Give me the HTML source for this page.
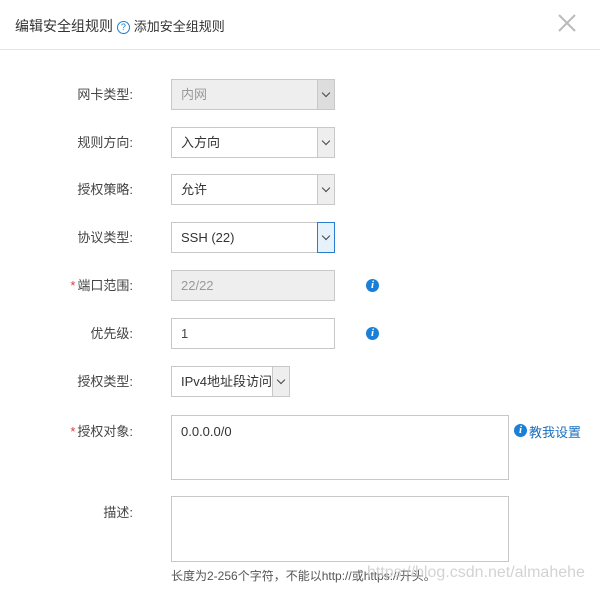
<!DOCTYPE html><html><head><meta charset="utf-8"><style>
body{margin:0;width:600px;height:596px;background:#fff;font-family:"Liberation Sans","Noto Sans CJK SC",sans-serif;font-size:13px;color:#333;position:relative;overflow:hidden}
.a{position:absolute}
.t{left:15px;top:16px;font-size:14px;color:#333}
.hr{left:0;top:49px;width:600px;height:1px;background:#e5e5e5}
.lbl{width:133px;text-align:right;left:0;line-height:31px;color:#444}
.lbl i{color:#e4393c;font-style:normal;margin-right:2px}
.box{left:171px;width:162px;height:29px;border:1px solid #c8c8c8;background:#fff;line-height:29px;box-sizing:content-box}
.box span{padding-left:9px}
.dis{background:#eee;color:#999}
.arr{position:absolute;right:0;top:0;width:16px;height:29px;border-left:1px solid #c8c8c8;background:#fff}
.arr:after{content:"";position:absolute;left:5px;top:10px;width:5px;height:5px;border-right:1px solid #444;border-bottom:1px solid #444;transform:rotate(45deg)}
.info{width:13px;height:13px;border-radius:50%;background:#1a7fd6;color:#fff;font:bold italic 11px "Liberation Serif",serif;text-align:center;line-height:13px}
</style></head><body>
<div class="a t">编辑安全组规则 <span style="display:inline-block;width:11px;height:11px;border:1px solid #1a7fd6;border-radius:50%;color:#1a7fd6;font-size:9px;line-height:11px;text-align:center;vertical-align:1px">?</span> <span style="font-size:13px">添加安全组规则</span></div>
<svg class="a" style="left:556px;top:12px" width="22" height="22"><path d="M3 3L19 19M19 3L3 19" stroke="#bbb" stroke-width="2"/></svg>
<div class="a hr"></div>

<div class="a lbl" style="top:79px">网卡类型:</div>
<div class="a box dis" style="top:79px"><span>内网</span><div class="arr" style="background:#ddd"></div></div>
<div class="a lbl" style="top:127px">规则方向:</div>
<div class="a box" style="top:127px"><span>入方向</span><div class="arr" style="background:#eee"></div></div>
<div class="a lbl" style="top:174px">授权策略:</div>
<div class="a box" style="top:174px"><span>允许</span><div class="arr" style="background:#eee"></div></div>
<div class="a lbl" style="top:222px">协议类型:</div>
<div class="a box" style="top:222px"><span>SSH (22)</span><div class="arr" style="background:#e5f1fb;border:1px solid #2a7cd0;top:-1px;right:-1px"></div></div>
<div class="a lbl" style="top:270px"><i>*</i>端口范围:</div>
<div class="a box dis" style="top:270px"><span>22/22</span></div>
<div class="a info" style="left:366px;top:279px">i</div>
<div class="a lbl" style="top:318px">优先级:</div>
<div class="a box" style="top:318px"><span style="color:#444">1</span></div>
<div class="a info" style="left:366px;top:327px">i</div>
<div class="a lbl" style="top:366px">授权类型:</div>
<div class="a box" style="top:366px;width:117px"><span>IPv4地址段访问</span><div class="arr" style="background:#eee"></div></div>
<div class="a lbl" style="top:416px;line-height:31px"><i>*</i>授权对象:</div>
<div class="a box" style="top:415px;width:336px;height:63px;line-height:31px"><span>0.0.0.0/0</span></div>
<div class="a info" style="left:514px;top:424px">i</div>
<div class="a" style="left:529px;top:422px;color:#1a6fc0;font-size:13px">教我设置</div>
<div class="a lbl" style="top:497px">描述:</div>
<div class="a box" style="top:496px;width:336px;height:64px"></div>
<div class="a" style="left:171px;top:567px;color:#555;font-size:12px">长度为2-256个字符，不能以http://或https://开头。</div>
<div class="a" style="left:367px;top:564px;color:rgba(200,200,200,.8);font-size:16px">https://blog.csdn.net/almahehe</div>
</body></html>
